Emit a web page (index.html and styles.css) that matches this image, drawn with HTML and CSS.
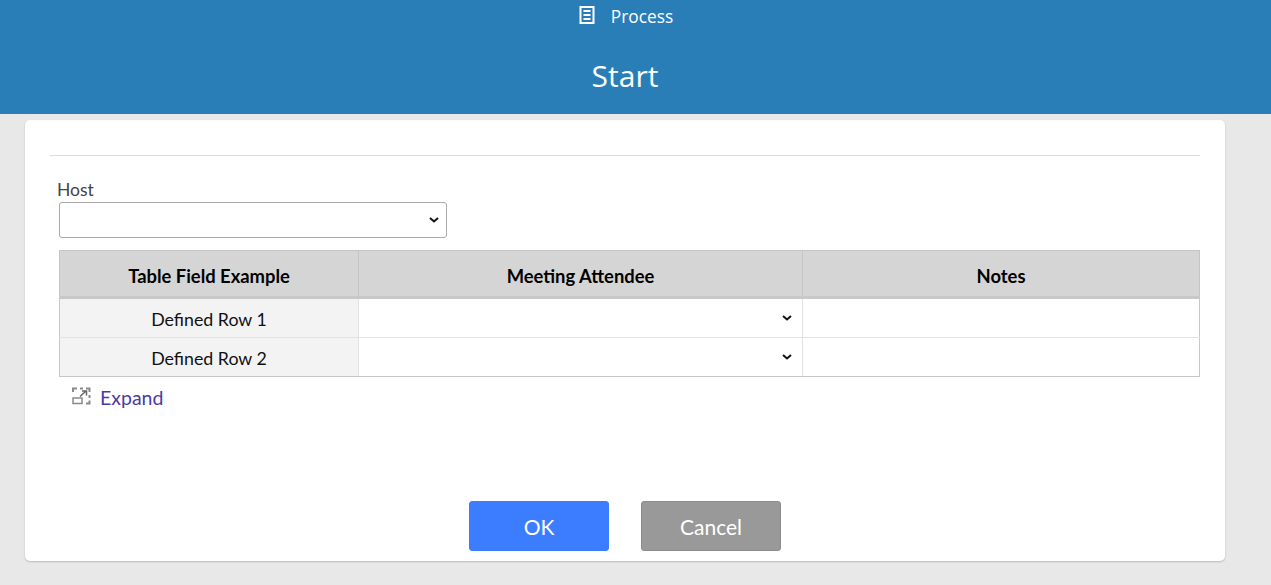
FILE: index.html
```html
<!DOCTYPE html>
<html lang="en">
<head>
    <meta charset="UTF-8">
    <title>Process - Start</title>
    <link rel="stylesheet" href="styles.css">
</head>
<body>

    <header class="top-bar">
        <div class="crumb">
            <svg class="crumb-icon" width="16" height="18" viewBox="0 0 16 18">
                <rect x="1.500" y="1" width="13" height="16" fill="none" stroke="#fff" stroke-width="2"/>
                <path d="M4.500 5h7M4.500 9h7M4.500 13h7" stroke="#fff" stroke-width="2"/>
            </svg>
            <span>Process</span>
        </div>
        <h1 class="title">Start</h1>
    </header>

    <main class="card">
        <hr class="rule">

        <div class="field">
            <label class="field-label" for="host">Host</label>
            <select class="host-select" id="host">
                <option></option>
            </select>
        </div>

        <table class="grid">
            <colgroup>
                <col class="col-name">
                <col class="col-attendee">
                <col class="col-notes">
            </colgroup>
            <thead>
                <tr>
                    <th>Table Field Example</th>
                    <th>Meeting Attendee</th>
                    <th>Notes</th>
                </tr>
            </thead>
            <tbody>
                <tr>
                    <td class="row-name">Defined Row 1</td>
                    <td><select class="cell-select"><option></option></select></td>
                    <td></td>
                </tr>
                <tr>
                    <td class="row-name">Defined Row 2</td>
                    <td><select class="cell-select"><option></option></select></td>
                    <td></td>
                </tr>
            </tbody>
        </table>

        <a class="expand" href="#">
            <svg class="expand-icon" width="19" height="18" viewBox="0 0 19 18">
                <path d="M1 5V1.500H5M8 1.500h3M14 1.500h3.500V5M17.500 8v3M17.500 13.500v3H14" fill="none" stroke="#8a8a8a" stroke-width="2"/>
                <rect x="1" y="11" width="9" height="5.500" fill="none" stroke="#8a8a8a" stroke-width="1.500"/>
                <path d="M8 9.500L14 4M10 4h4.500v4.500" fill="none" stroke="#666" stroke-width="1.500"/>
            </svg>
            <span>Expand</span>
        </a>

        <div class="actions">
            <button class="btn btn-ok">OK</button>
            <button class="btn btn-cancel">Cancel</button>
        </div>
    </main>

</body>
</html>
```

FILE: styles.css
```css
/* General */
body {
    margin: 0;
    height: 585px;
    overflow: hidden;
    background: #e8e8e8;
    font-family: Lato, "Open Sans", sans-serif;
    font-size: 17.800px;
    color: #111;
}

/* Header */
.top-bar {
    height: 114px;
    padding-right: 21px;
    background: #2a7eb8;
    color: #fff;
    font-family: "Open Sans", sans-serif;
    text-align: center;
}

.crumb {
    display: flex;
    justify-content: center;
    align-items: center;
    gap: 16px;
    height: 32px;
    padding-left: 2px;
    font-size: 17.300px;
}

.crumb-icon {
    margin-top: -3px;
}

.title {
    margin: 22px 0 0;
    font-size: 30px;
    font-weight: 400;
    line-height: 44px;
}

/* Card */
.card {
    width: 1150px;
    height: 441px;
    margin: 6px 0 0 25px;
    padding: 0 25px;
    background: #fff;
    border-radius: 5px;
    box-shadow: 0 1px 2px rgba(0, 0, 0, 0.2);
    display: flex;
    flex-direction: column;
}

.rule {
    width: 100%;
    margin: 35px 0 0;
    border: 0;
    border-top: 1px solid #dcdcdc;
}

.field {
    margin-top: 25px;
    padding-left: 7px;
}

.field-label {
    display: block;
    height: 21px;
    line-height: 18px;
    color: #444;
    font-size: 17.500px;
}

/* chevron shared by both kinds of select */
.host-select,
.cell-select {
    appearance: none;
    background-color: #fff;
    background-image: url("data:image/svg+xml,%3Csvg xmlns='http://www.w3.org/2000/svg' width='10' height='6' viewBox='0 0 10 6'%3E%3Cpath d='M1 1l4 3.500L9 1' fill='none' stroke='%23111' stroke-width='2'/%3E%3C/svg%3E");
    background-repeat: no-repeat;
}

.host-select {
    display: block;
    width: 388px;
    height: 36px;
    margin-left: 2px;
    border: 1px solid #aaa;
    border-radius: 3px;
    background-position: right 7px center;
}

/* Table */
.grid {
    width: 1141px;
    margin: 12px 0 0 9px;
    border-collapse: collapse;
    table-layout: fixed;
}

.col-name {
    width: 299px;
}

.col-attendee {
    width: 444px;
}

.grid th {
    height: 40px;
    padding: 5px 0 0;
    background: #d5d5d5;
    border: 1px solid #c4c4c4;
    border-bottom: 3px solid #c8c8c8;
    font-size: 18.400px;
    font-weight: 700;
    color: #000;
}

.grid td {
    height: 38px;
    padding: 0;
    border: 1px solid #e2e2e2;
    text-align: center;
}

.grid tbody tr:last-child td {
    border-bottom-color: #c8c8c8;
}

.grid td:first-child {
    border-left-color: #c8c8c8;
}

.grid td:last-child {
    border-right-color: #c8c8c8;
}

.grid .row-name {
    height: 37px;
    padding-top: 1px;
    background: #f3f3f3;
}

.cell-select {
    display: block;
    width: 100%;
    height: 36px;
    border: 0;
    background-position: right 10px center;
}

/* Expand link */
.expand {
    display: flex;
    align-items: center;
    gap: 9px;
    margin: 9px 0 0 22px;
    color: #4a3aa8;
    font-size: 19.500px;
    text-decoration: none;
}

.expand-icon {
    margin-top: -3px;
}

/* Buttons */
.actions {
    display: flex;
    justify-content: center;
    gap: 32px;
    margin-top: auto;
    padding-bottom: 10px;
}

.btn {
    width: 140px;
    height: 50px;
    border-radius: 3px;
    color: #fff;
    font-family: inherit;
    font-size: 21px;
}

.btn-ok {
    background: #3c7cff;
    border: 1px solid #3c7cff;
}

.btn-cancel {
    background: #999;
    border: 1px solid #8c8c8c;
}
```
